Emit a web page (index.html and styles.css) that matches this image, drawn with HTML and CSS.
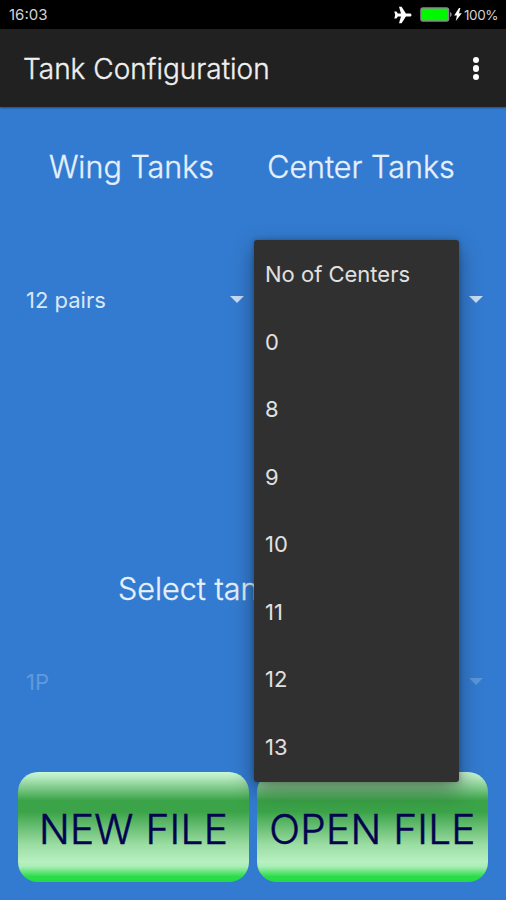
FILE: index.html
```html
<!DOCTYPE html>
<html lang="en">
<head>
<meta charset="UTF-8" />
<meta name="viewport" content="width=device-width, initial-scale=1" />
<title>Tank Configuration</title>
<link rel="stylesheet" href="styles.css">
</head>
<body>
<div class="status-bar">
  <span class="clock">16:03</span>
  <svg class="plane" width="18" height="18" viewBox="0 0 18 18">
    <path d="M17.500 9c0-1.100-.8-1.600-1.600-1.600h-4L7.600.8H5l2 6.600H3.900L2.400 5.400H.3L1.200 9l-.9 3.600h2.100l1.500-2H7l-2 6.600h2.600l4.300-6.600h4c.8 0 1.600-.5 1.600-1.600z" fill="#fff" />
  </svg>
  <svg class="battery" width="32" height="15" viewBox="0 0 32 15">
    <rect x="1" y="1" width="27.500" height="13" rx="2" fill="#00f800" stroke="#8d8590" stroke-width="1.500" />
    <path d="M30 5v5c1.200-.4 1.600-1.200 1.600-2.500s-.4-2.100-1.600-2.500z" fill="#8d8590" />
  </svg>
  <svg class="bolt" width="8" height="13" viewBox="0 0 8 13">
    <path d="M5 0L.2 7.500h2.700L1.800 13l6-7.800H5L6.400 0z" fill="#fff" />
  </svg>
  <span class="percent">100%</span>
</div>

<header class="app-bar">
  <h1>Tank Configuration</h1>
  <button class="overflow" aria-label="More options"><i></i><i></i><i></i></button>
</header>

<main class="content">
  <div class="headings">
    <h2>Wing Tanks</h2>
    <h2>Center Tanks</h2>
  </div>

  <div class="spinners">
    <div class="spinner"><span>12 pairs</span><i class="arrow"></i></div>
    <div class="spinner"><span></span><i class="arrow"></i></div>
  </div>

  <h2 class="select-title">Select tan</h2>

  <div class="spinners disabled">
    <div class="spinner"><span>1P</span><i class="arrow"></i></div>
  </div>

  <div class="actions">
    <button class="file-button">NEW FILE</button>
    <button class="file-button">OPEN FILE</button>
  </div>
</main>

<ul class="dropdown">
  <li>No of Centers</li>
  <li>0</li>
  <li>8</li>
  <li>9</li>
  <li>10</li>
  <li>11</li>
  <li>12</li>
  <li>13</li>
</ul>
</body>
</html>
```

FILE: styles.css
```css
* {
  box-sizing: border-box;
}
body {
  position: relative;
  margin: 0;
  height: 900px;
  overflow: hidden;
  background: #337bd0;
  color: #e6f0fb;
  font-family: Inter, Roboto, sans-serif;
  white-space: nowrap;
}
h1, h2 {
  margin: 0;
  font-weight: 300;
  -webkit-text-stroke: 0.35px currentColor;
}
button {
  padding: 0;
  border: none;
  font-family: inherit;
}
.status-bar {
  display: flex;
  align-items: center;
  height: 29px;
  padding: 0 8px 0 9px;
  background: #000;
  color: #d4d4d4;
  font-size: 15px;
}
.clock {
  flex: 1;
}
.battery {
  margin: 0 2px 0 8px;
}
.percent {
  width: 34px;
  margin-left: 2px;
  font-size: 13.5px;
  letter-spacing: -0.4px;
}
.app-bar {
  display: flex;
  align-items: center;
  justify-content: space-between;
  height: 78px;
  padding: 1px 25px 0 23px;
  background: #212121;
  box-shadow: 0 1px 2px rgba(0, 0, 0, 0.4);
}
h1 {
  color: #efefef;
  font-size: 28px;
}
.overflow {
  display: flex;
  flex-direction: column;
  gap: 2px;
  padding: 0 2px;
  background: none;
}
.overflow i {
  width: 6.5px;
  height: 6.5px;
  border-radius: 50%;
  background: #fff;
}
.headings {
  display: grid;
  grid-template-columns: 227px 232px;
  padding: 40px 18px 0;
}
h2 {
  font-size: 30.5px;
  line-height: 40px;
  text-align: center;
}
.spinners {
  display: grid;
  grid-template-columns: 231px 231px;
  column-gap: 8px;
  margin-top: 83px;
  padding: 0 18px;
}
.spinner {
  display: flex;
  align-items: center;
  justify-content: space-between;
  height: 60px;
  padding: 0 5px 0 8px;
  color: #d9e7f7;
  font-size: 22px;
}
.arrow {
  margin-bottom: 1px;
  border: 7px solid transparent;
  border-top: 7px solid #c7dcf3;
  border-bottom: 0;
}
.select-title {
  margin-top: 239px;
  padding-left: 118px;
  text-align: left;
}
.disabled {
  display: block;
  margin-top: 43px;
}
.disabled span,
.disabled i {
  opacity: 0.28;
}
.actions {
  display: grid;
  grid-template-columns: 231px 231px;
  column-gap: 8px;
  margin-top: 60px;
  padding: 0 18px;
}
.file-button {
  height: 110px;
  padding-top: 4px;
  border-radius: 20px;
  background: linear-gradient(#c9f8d6 0%, #b5e9bf 5%, #3ba348 26%, #3ba348 36%, #9bdda3 66%, #b7f0c1 82%, #a8eeb4 86%, #2bdd4b 95%, #25da45 100%);
  color: #03034f;
  font-size: 40.5px;
  font-weight: 300;
  letter-spacing: 0.3px;
  -webkit-text-stroke: 0.5px currentColor;
}
.dropdown {
  position: absolute;
  top: 240px;
  left: 254px;
  width: 205px;
  height: 542px;
  margin: 0;
  padding: 1px 0;
  border-radius: 3px;
  background: #303030;
  box-shadow: 0 8px 22px rgba(0, 0, 0, 0.4), 0 0 5px rgba(0, 0, 0, 0.25);
  color: #e0e0e0;
  font-size: 22px;
  list-style: none;
}
.dropdown li {
  height: 67.5px;
  padding-left: 11px;
  line-height: 67.5px;
}
```
